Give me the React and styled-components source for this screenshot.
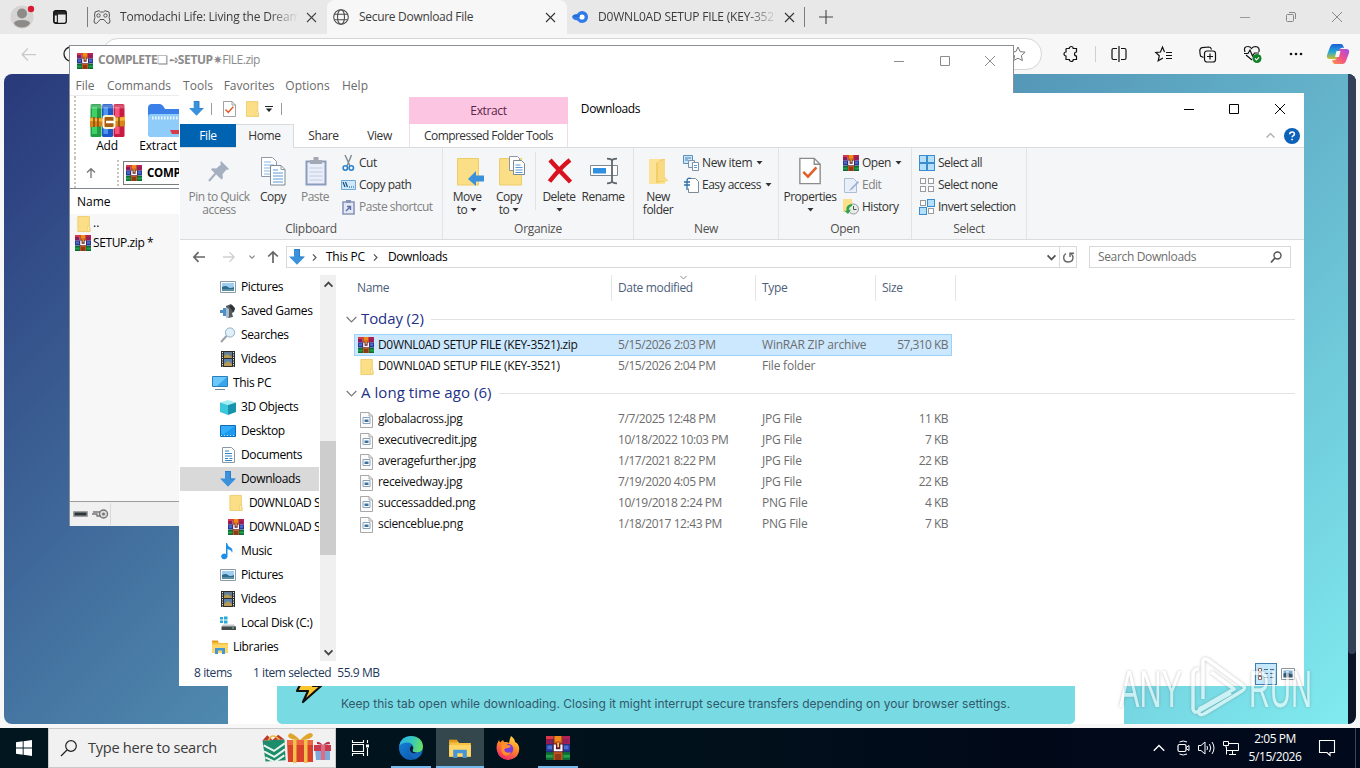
import React from 'react';
import styled, { createGlobalStyle, css } from 'styled-components';

const Global = createGlobalStyle`
  * { box-sizing: border-box; }
  html, body { margin: 0; padding: 0; overflow: hidden; }
  body { font-family: "Open Sans", "Noto Sans", "DejaVu Sans", sans-serif; font-size: 12px; color: #000; }
  svg { display: block; flex: none; overflow: visible; }
`;

/* ---------- icons ---------- */

const Svg = ({ w = 16, h, box, children, ...rest }) => (
  <svg width={w} height={h || w} viewBox={box || `0 0 ${w} ${h || w}`} fill="none" {...rest}>{children}</svg>
);

const Rar = ({ s = 16 }) => (
  <Svg w={s} box="0 0 16 16">
    <path d="M0 1h4.5v4.5H0z" fill="#a8173d" /><path d="M11 0h5v5.5h-5z" fill="#b32054" />
    <path d="M0 0h5v2H0z" fill="#d63a4b" /><path d="M1 2.5h3.5v2.4H1z" fill="#7c1f6c" /><path d="M11.5 2h3.6v2.8h-3.6z" fill="#8f1f5e" />
    <path d="M0 5.5h16v5H0z" fill="#263a9a" /><path d="M1 6.4h3v2.4H1zM12 6.4h3v2.4h-3z" fill="#4a6fd0" />
    <path d="M0 10.7h16V16H0z" fill="#0d6b35" /><path d="M0 12.5h4.5v2H0zM11.5 12.5H16v2h-4.5z" fill="#22a04a" />
    <path d="M5 0h6v16H5z" fill="#c4551c" /><path d="M6 0h4v3.6H6z" fill="#f08a1d" /><path d="M6 12h4v4H6z" fill="#8d3a18" />
    <path d="M4.6 5h7v5.8h-7z" fill="#5c1c35" /><path d="M5.2 5.6h1.4v3.2h3V5.6H11v4.6H5.2z" fill="#fff" /><path d="M7.5 4.5h1.2v3H7.5z" fill="#ffc24c" />
  </Svg>
);

const RarBooks = () => (
  <Svg w={35} h={35}>
    <rect x="0.5" y="1" width="11" height="33" rx="1.5" fill="#1f9e45" /><path d="M2 4h5v27H2z" fill="#3fd166" />
    <rect x="12" y="1" width="11" height="33" rx="1.5" fill="#2057c8" /><path d="M13.500 4h4.500v27h-4.500z" fill="#4a97f2" />
    <rect x="23.500" y="1" width="11" height="33" rx="1.500" fill="#c91b41" /><path d="M25 4h4.500v27H25z" fill="#f4557a" />
    <path d="M0 1.500h35v4H0z" fill="#fff" opacity=".25" />
    <path d="M0 14.500l17 1 18-2v10l-18-.5-17 1z" fill="#d8841c" /><path d="M0 15l17 1 18-2v3.500l-18 1-17-.5z" fill="#f7b63b" />
    <path d="M4 14v10M8 14v10M29 14v10" stroke="#8b4a0c" strokeWidth="1.500" />
    <rect x="13.500" y="13" width="11" height="12" rx="2" fill="#a85c12" stroke="#fff3d0" strokeWidth="2" /><path d="M16 19h9" stroke="#fff" strokeWidth="2.500" />
  </Svg>
);

const BlueFolder = () => (
  <Svg w={20} h={35}>
    <path d="M0 5q0-4 4-4h8q2 0 3.500 2.500L17 6h23v28H4q-4 0-4-4z" fill="#3b7fe8" />
    <path d="M0 14q0-3 3-3h37v23H4q-4 0-4-4z" fill="#90ccfa" /><path d="M4 15h36" stroke="#eaf6ff" strokeWidth="3" strokeDasharray="1.5 1.5" />
    <path d="M22 27h18v4H24z" fill="#d8394b" />
  </Svg>
);

const Folder = ({ w = 14, h = 17 }) => (
  <Svg w={w} h={h} box="0 0 14 17"><path d="M.5 .5h12.200v12l.8.5v3.500H.5z" fill="#fbdf86" stroke="#e9c55e" strokeWidth=".8" /><path d="M11 10.500h2v5.800h-2z" fill="#fff0bb" stroke="#e9c55e" strokeWidth=".6" /></Svg>
);

const Down = ({ w = 16 }) => (
  <Svg w={w} box="0 0 16 16"><path d="M5 0h6v7.500h5L8 15.800 0 7.500h5z" fill="#3a92dc" /><path d="M5.500 .5h5v7.500h4" stroke="#2475c0" strokeWidth=".7" /></Svg>
);

const CheckDoc = ({ w = 13, h = 16 }) => (
  <Svg w={w} h={h} box="0 0 13 16"><path d="M.5 .5h8.500l3.500 3.500v11.500H.5z" fill="#fff" stroke="#8b8b8b" strokeWidth=".8" /><path d="M9 .5V4h3.500" stroke="#8b8b8b" strokeWidth=".8" /><path d="M2.500 8.500l2.800 2.800 5-5.500" stroke="#e0602c" strokeWidth="1.500" /></Svg>
);

const ImgFile = () => (
  <Svg w={13} h={16}><path d="M.5.500h8.500l3.500 3.500v11.500H.5z" fill="#fbfbfb" stroke="#a8a8a8" /><path d="M9 .5V4h3.500" stroke="#a8a8a8" /><path d="M3 5.500h7v6H3z" fill="#fff" stroke="#86a3bd" /><path d="M4.500 7.500h4v2.500h-4z" fill="#3d719e" /></Svg>
);

const Picture = () => (
  <Svg w={16} h={12}><path d="M.5.500h15v11H.5z" fill="#fff" stroke="#8b9aa5" /><path d="M2 2h12v8H2z" fill="#9dcdf0" /><path d="M2 6q4-2 6 0t6 0v4H2z" fill="#2d6b8f" /><path d="M2 8h12v2H2z" fill="#5b8fa5" /></Svg>
);
const Games = () => (
  <Svg><path d="M6 3l5-2 4 4-1 4-2 1 1 4-5 1-2-4z" fill="#555b61" /><path d="M9 3l3-1 3 4-2 3z" fill="#2e3338" /><path d="M3 5h3v2h2v3H6v3H3v-3H0V7h3z" fill="#4e8fc7" /><path d="M6 4l3 2v8l-3 1z" fill="#a9bccc" /></Svg>
);
const Glass = () => (
  <Svg><path d="M6.500 9L1 15" stroke="#9aa1a8" strokeWidth="2" /><circle cx="10" cy="5.500" r="4.600" fill="#dff0fb" stroke="#93aec4" /></Svg>
);
const Film = () => (
  <Svg w={14} h={16}><path d="M0 0h14v16H0z" fill="#2b2b2b" /><path d="M3 1h8v6H3z" fill="#5f7c94" /><path d="M3 8h8v7H3z" fill="#5b85ad" /><path d="M3 5l3-2 5 3v1H3zM3 13l4-3 4 3v2H3z" fill="#b79b52" /><path d="M1.500 1v15M12.500 1v15" stroke="#eee" strokeWidth="1" strokeDasharray="1.200 1.200" /></Svg>
);
const Pc = () => (
  <Svg><path d="M.5 1.500h15v10H.5z" fill="#36a7ec" stroke="#2980b8" /><path d="M1 2h14L5 11H1z" fill="#6cc7fb" /><path d="M3 14.500h10" stroke="#6e8796" /></Svg>
);
const Cube = () => (
  <Svg><path d="M0 3.500L8 1l8 2.500L8 6z" fill="#a6eef4" /><path d="M0 3.500L8 6v10l-8-3z" fill="#3bc7dc" /><path d="M16 3.500L8 6v10l8-3z" fill="#1893ae" /></Svg>
);
const Desk = () => (
  <Svg w={16} h={12}><path d="M.5.500h15v11H.5z" fill="#1b9af0" stroke="#0c6dbb" /><path d="M1 1h14L4 9H1z" fill="#34aefb" /><path d="M1 10.500h14" stroke="#bfe3ff" strokeDasharray="1 2" /></Svg>
);
const Docs = () => (
  <Svg w={13} h={16}><path d="M.5.500h9l3 3v12H.5z" fill="#fff" stroke="#8c98a3" /><path d="M3 4h4M3 6.500h7M3 9h7M3 11.500h3M7.500 11.500h3M3 13.500h7" stroke="#2f86c6" /></Svg>
);
const Music = () => (
  <Svg><path d="M7 0q.5 3 3.500 4.500T12 10q0-3-4.500-4v7a3.200 2.800 0 1 1-1.500-2V0z" fill="#1e90e6" /></Svg>
);
const Disk = () => (
  <Svg w={16} h={14}><path d="M0 1h3v2.500H0zM4 .5h3.500v3H4zM0 4.500h3V7H0zM4 4.500h3.500v3H4z" fill="#25a9d6" /><path d="M3 8.500h11l2 2.500H1.500z" fill="#c4c9cd" /><path d="M1.500 10.500H16V14H1.500z" fill="#44494d" /><path d="M12 12h2" stroke="#5fe07a" /></Svg>
);
const Libs = ({ w = 16, h = 14 }) => (
  <Svg w={w} h={h} box="0 0 16 14"><path d="M0 1.500h6l1.500 1.500H16V13H0z" fill="#f6c243" /><path d="M0 .5h6v2H0z" fill="#e69a1d" /><path d="M0 4.500h16V13H0z" fill="#ffd768" /><path d="M3 14V8h10v6h-3v-3.500H6V14z" fill="#4596d5" /></Svg>
);

const Pin = () => (
  <Svg w={22} h={22}><path d="M13 1l8 8-1.500 1-1-.4-4 4.600.4 4-1.500 1.300L3 9.500l1.300-1.300 4 .4 4.600-4-.6-1.800z" fill="#a4b0bf" /><path d="M7.500 13.500L1 21" stroke="#a4b0bf" strokeWidth="2" /></Svg>
);
const CopyI = () => (
  <Svg w={25} h={29}><g><path d="M.5.500h11l4 4v15H.5z" fill="#fff" stroke="#8d99a6" /><path d="M3 5h7M3 8h10M3 11h8M3 14h8M3 17h8" stroke="#85b7e0" /></g><g transform="translate(9 8)"><path d="M.5.500h10.500l4 4v15.500H.5z" fill="#fff" stroke="#7d8996" /><path d="M11 .5v4h4" stroke="#8d99a6" /><path d="M3 5h5M3 8h10M3 11h10M3 14h10M3 17h10" stroke="#5b9bd5" /></g></Svg>
);
const PasteI = () => (
  <Svg w={22} h={29}><path d="M1.500 4.500h19v23h-19z" fill="#e9eef8" stroke="#8b9cc0" strokeWidth="2" /><path d="M5 3h3.500V0h5v3H17v4H5z" fill="#a3a9b2" /><path d="M4.500 11h13M4.500 15h13M4.500 19h13M4.500 23h13" stroke="#c3cee4" /></Svg>
);
const CutI = () => (
  <Svg w={13} h={17}><path d="M3 0l5 11M9.500 0L5 11" stroke="#7f8993" strokeWidth="1.400" /><circle cx="3.300" cy="13" r="2.200" stroke="#2c82c9" strokeWidth="1.600" /><circle cx="9.300" cy="13" r="2.200" stroke="#2c82c9" strokeWidth="1.600" /></Svg>
);
const PathI = () => (
  <Svg w={15} h={10}><path d="M.5.500h14v9H.5z" fill="#cfe8fb" stroke="#6ba8d6" /><path d="M2 2l2 5M4.500 2l2 5M8 7h1M10 7h1M12 7h1" stroke="#14507e" strokeWidth="1.200" /></Svg>
);
const ShortI = () => (
  <Svg w={13} h={15}><path d="M1 2h11v12H1z" fill="#e3e8f5" stroke="#8b95b8" strokeWidth="1.600" /><path d="M4 0h5v3H4z" fill="#8b95b8" /><path d="M4 11l4-4M5 6.500h3.500V10" stroke="#5c6ea5" strokeWidth="1.400" /></Svg>
);
const MoveI = () => (
  <Svg w={27} h={29}><path d="M.5 1.500h21V28H.5z" fill="#fbdf86" stroke="#eccb6d" /><path d="M27 18.500h-8v-4.500L11 22l8 7v-4.500h8z" fill="#3a92dc" /></Svg>
);
const CopyToI = () => (
  <Svg w={26} h={30}><path d="M.5 2.500h22V29H.5z" fill="#fbdf86" stroke="#eccb6d" /><path d="M10.500.500h8l2 2v12h-10z" fill="#fff" stroke="#8d99a6" /><path d="M14.500 4.500h8l3 3v11h-11z" fill="#fff" stroke="#7d8996" /><path d="M16.500 9h5M16.500 11.500h7M16.500 14h7M16.500 16.500h7" stroke="#5b9bd5" /></Svg>
);
const DelI = () => (
  <Svg w={26} h={26}><path d="M3 2Q10 10 23.500 24M23 2Q14 9 2.500 23.500" stroke="#d9121f" strokeWidth="4.400" /></Svg>
);
const RenI = () => (
  <Svg w={28} h={26}><path d="M.5 7.500h27v10H.5z" fill="#fff" stroke="#7d8790" /><path d="M3 10h13v5.500H3z" fill="#2f8fe0" /><path d="M17 .7q5 0 5 2.500v19.600q0 2.500-5 2.500M27 .7q-5 0-5 2.500v19.600q0 2.500 5 2.500" stroke="#5f666d" strokeWidth="1.800" /></Svg>
);
const NewFI = () => (
  <Svg w={19} h={25}><path d="M0 0h16v25H0z" fill="#fbe297" /><path d="M7 4l6-4h3v18l3 4-12 2z" fill="#f3cd66" /><path d="M9 3l7-2v18l3 3H9z" fill="#f8da83" /></Svg>
);
const NewItemI = () => (
  <Svg w={16}><path d="M.5.500h9v8h-9z" fill="#cbe6fa" stroke="#5f91b8" /><path d="M2 3h6M2 5h3" stroke="#3f82b4" /><path d="M5.500 5.500h6v7h-6z" fill="#eef4fa" stroke="#7d92a5" /><path d="M9.500 7.500h6v8h-6z" fill="#fff" stroke="#7d92a5" /><path d="M11 10.500h3M11 12.500h3" stroke="#5b9bd5" /></Svg>
);
const EasyI = () => (
  <Svg w={15} h={16}><path d="M4.500 1.500h7l3 3v11h-10v-4" fill="#fff" stroke="#7f8b96" /><path d="M7 1.500q-4-1.500-4 3V13M0 5h6M0 8h6" stroke="#2f6fa8" strokeWidth="1.300" /></Svg>
);
const EditI = () => (
  <Svg w={15} h={16}><path d="M.5 1.500h9l3 3v11H.5z" fill="#e8eff9" stroke="#aebdd3" /><path d="M14 4L7 11l-2 3 3-1.500 7-7z" fill="#9db4d6" /></Svg>
);
const HistI = () => (
  <Svg w={16}><path d="M0 0h9l1 13H0z" fill="#fbe08c" /><circle cx="10.500" cy="10" r="5" fill="#e7ece9" stroke="#8d979c" /><path d="M10.500 7v3.500h3" stroke="#555" /><path d="M9 5Q2 6 3.500 12l-2.500-.5L5 15l3-4.500-2 .5Q5.500 8 9 7z" fill="#2fa54a" /></Svg>
);
const SelI = ({ kind }) => {
  const on = kind === 'all' ? [1, 1, 1, 1] : kind === 'inv' ? [0, 1, 1, 0] : [0, 0, 0, 0];
  return (
    <Svg w={16}>
      {on.map((o, i) => {
        const x = (i % 2) * 8, y = (i > 1 ? 1 : 0) * 8;
        return o
          ? <rect key={i} x={x + .5} y={y + .5} width="7" height="7" fill="#b5e0fc" stroke="#3c8dd0" />
          : <rect key={i} x={x + 1.500} y={y + 1.500} width="5" height="5" fill="#fff" stroke="#9a9a9a" />;
      })}
    </Svg>
  );
};

const Min = ({ c = '#000' }) => <Svg w={10} h={10}><path d="M0 5.500h10" stroke={c} /></Svg>;
const Max = ({ c = '#000' }) => <Svg w={10} h={10}><path d="M.5.500h9v9h-9z" stroke={c} /></Svg>;
const Restore = ({ c }) => <Svg w={10} h={10}><rect x=".5" y="2.500" width="7" height="7" rx="1" stroke={c} /><path d="M3 .5h5q1.500 0 1.500 1.500v5" stroke={c} /></Svg>;
const Cross = ({ c = '#000', s = 10, sw = 1 }) => <Svg w={s} box="0 0 10 10"><path d="M0 0l10 10M10 0L0 10" stroke={c} strokeWidth={sw} /></Svg>;
const Chev = ({ d = 'down', c = '#555', s = 8, sw = 1.400 }) => {
  const r = { down: 0, left: 90, up: 180, right: 270 }[d];
  return <Svg w={s} box="0 0 8 8"><path d="M.5 2.200L4 5.700l3.500-3.500" stroke={c} strokeWidth={sw} transform={`rotate(${r} 4 4)`} /></Svg>;
};
const Arrow = ({ d = 'left', c = '#666', s = 12, sw = 1.700 }) => (
  <Svg w={s} box="0 0 12 12"><path d="M12 6H1M5.500 1.200L.9 6l4.600 4.800" stroke={c} strokeWidth={sw} transform={`rotate(${{ left: 0, up: 90, right: 180 }[d]} 6 6)`} /></Svg>
);
const Caret = () => <Svg w={7} h={4}><path d="M.5 0h6L3.500 3.500z" fill="#333" /></Svg>;

/* ---------- shared pieces ---------- */

const Row = styled.div`
  display: flex;
  align-items: center;
`;
const Slot = styled.div`
  flex: none;
  display: flex;
  align-items: center;
  justify-content: center;
  width: ${(p) => p.$w}px;
  margin-left: ${(p) => p.$ml || 0}px;
`;
const Label = styled.span`
  flex: none;
  white-space: pre;
  ${(p) => p.$ls !== undefined && css`letter-spacing: ${p.$ls}px;`}
  margin-left: ${(p) => p.$ml || 0}px;
  margin-bottom: 2px;
  color: ${(p) => p.$c || 'inherit'};
  font-weight: ${(p) => p.$b ? 700 : 400};
`;
const Rule = styled.div`
  flex: none;
  width: 1px;
  height: ${(p) => p.$h}px;
  margin-left: ${(p) => p.$ml || 0}px;
  background: ${(p) => p.$c || '#b5b5b5'};
`;
const Spacer = styled.div`flex: 1;`;

/* ---------- desktop & browser ---------- */

const Screen = styled.div`
  position: relative;
  width: 1360px;
  height: 768px;
  overflow: hidden;
  display: flex;
  flex-direction: column;
  background: #f7f7f7;
`;
const TabStrip = styled(Row)`
  height: 34px;
  background: #e8e8e8;
  font-size: 12px;
  color: #3c3c3c;
`;
const Avatar = styled.div`
  flex: none;
  margin-left: 10px;
  width: 24px;
  height: 24px;
`;
const Tab = styled(Row)`
  flex: none;
  height: 34px;
  width: ${(p) => p.$w}px;
  padding-left: ${(p) => p.$pl}px;
  border-radius: 8px 8px 0 0;
  background: ${(p) => p.$on ? '#f7f7f7' : 'transparent'};
`;
const TabText = styled.span`
  flex: none;
  width: ${(p) => p.$w}px;
  margin-left: 10px;
  margin-bottom: 1px;
  white-space: nowrap;
  overflow: hidden;
  letter-spacing: ${(p) => p.$ls || 0}px;
  ${(p) => p.$fade && css`mask-image: linear-gradient(90deg, #000 84%, transparent 101%);`}
`;
const Toolbar = styled(Row)`height: 40px;`;
const UrlBar = styled(Row)`
  flex: none;
  width: 940px;
  height: 32px;
  padding-right: 15px;
  justify-content: flex-end;
  border: 1px solid #d6d6d6;
  border-radius: 16px;
  background: #fff;
`;
const Viewport = styled.div`
  display: flex;
  justify-content: space-between;
  height: 650px;
  margin: 0 4px;
  border-radius: 8px;
  overflow: hidden;
  background: linear-gradient(135deg, #29397b 0%, #5699b9 52%, #80ebf0 100%);
`;
const Card = styled.div`
  width: 896px;
  margin: 60px 0 0 224px;
  background: #fff;
  display: flex;
  flex-direction: column;
  justify-content: flex-end;
  padding: 0 49px;
`;
const Notice = styled(Row)`
  height: 90px;
  padding: 41px 0 0 18px;
  align-items: flex-start;
  border-radius: 0 0 5px 5px;
  background: #78dbe3;
  color: #33576b;
  font-family: Inter, "Open Sans", sans-serif;
  font-size: 12px;
`;
const NoticeText = styled.div`
  margin: 21px 0 0 19px;
  line-height: 16px;
  white-space: nowrap;
  letter-spacing: ${(p) => p.$ls}px;
`;
const PageScroll = styled.div`
  width: 8px;
  background: #0c1326;
  &::before {
    content: '';
    display: block;
    height: 580px;
    background: #334058;
    border-radius: 0 0 4px 4px;
  }
`;

const Browser = () => (
  <>
    <TabStrip>
      <Avatar>
        <Svg w={24}><circle cx="12" cy="12" r="11.500" fill="#d6d4d2" /><circle cx="12" cy="8.500" r="5" fill="#8d8b89" /><path d="M4 18.500q0-3.500 8-3.500t8 3.500q-2.500 4-8 4t-8-4z" fill="#8d8b89" /><circle cx="21" cy="4" r="3.200" fill="#d91b34" /></Svg>
      </Avatar>
      <Slot $w={14} $ml={19}><Svg w={14}><rect x=".7" y=".7" width="12.600" height="12.600" rx="2" stroke="#111" strokeWidth="1.300" /><path d="M1 1h12v3.500H5V13H1z" fill="#111" opacity=".9" /><path d="M1.800 5.500h2V12h-2z" fill="#e8e8e8" /></Svg></Slot>
      <Rule $h={20} $ml={20} $c="#7d7d7d" />
      <Tab $w={239} $pl={6}>
        <Svg w={16} h={14}><path d="M4 1q1-1 2.500 1h3q1.500-2 2.500-1l3 1 .5 4q-1 1 0 3t0 4q-2 1.500-4-1.500L10 9.500H6L4.500 11.500q-2 3-4 1.500-1-2 0-4t0-3L1 2z" stroke="#555" /><circle cx="4.500" cy="5.500" r="1.700" stroke="#555" /><circle cx="11.500" cy="5.500" r="1.700" stroke="#555" /></Svg>
        <TabText $w={177} $fade $ls={-0.2}>Tomodachi Life: Living the Dream</TabText>
        <Slot $w={9} $ml={10}><Cross c="#444" s={9} sw={1.200} /></Slot>
      </Tab>
      <Tab $w={240} $pl={6} $on>
        <Svg w={16}><g stroke="#4c4c4c" strokeWidth="1.100"><circle cx="8" cy="8" r="7.300" /><ellipse cx="8" cy="8" rx="3.500" ry="7.300" /><path d="M1.500 5.300h13M1.500 10.700h13" /></g></Svg>
        <TabText $w={176} $ls={-0.3}>Secure Download File</TabText>
        <Slot $w={9} $ml={11}><Cross c="#333" s={9} sw={1.200} /></Slot>
      </Tab>
      <Tab $w={237} $pl={5}>
        <Svg w={16} h={12}><path d="M0 6q1-3 5-3Q7 0 10.500 0 16 1 16 6t-5.500 6Q7 12 5.500 9.500 1 9 0 6z" fill="#2f7be8" /><circle cx="10" cy="6" r="2.600" fill="#fff" /><path d="M1 5h7" stroke="#1b5fc4" /></Svg>
        <TabText $w={178} $fade $ls={-0.2}>D0WNL0AD SETUP FILE (KEY-3521)</TabText>
        <Slot $w={9} $ml={9}><Cross c="#333" s={9} sw={1.200} /></Slot>
      </Tab>
      <Rule $h={20} $c="#7d7d7d" />
      <Slot $w={14} $ml={14}><Svg w={14}><path d="M7 0v14M0 7h14" stroke="#444" strokeWidth="1.100" /></Svg></Slot>
      <Spacer />
      <Slot $w={46}><Min c="#999" /></Slot>
      <Slot $w={46}><Restore c="#888" /></Slot>
      <Slot $w={46}><Cross c="#888" /></Slot>
    </TabStrip>
    <Toolbar>
      <Slot $w={16} $ml={20}><Arrow c="#c9c9c9" s={15} sw={1} /></Slot>
      <Slot $w={16} $ml={27}><Svg w={16}><circle cx="8" cy="8" r="7" stroke="#222" strokeWidth="1.300" /></Svg></Slot>
      <Slot $w={940} $ml={23}><UrlBar><Svg w={16}><path d="M8 1l2.100 4.600 5 .6-3.700 3.400 1 5L8 12.200 3.600 14.600l1-5L.9 6.200l5-.6z" stroke="#777" /></Svg></UrlBar></Slot>
      <Slot $w={18} $ml={20}><Svg w={16}><path d="M4 2.500h2.200a2 2 0 0 1 4 0h3.300V6a2 2 0 1 0 0 4v3.500h-3.200a2 2 0 0 1-4 0H3V10a2 2 0 1 1 0-4V3.500q0-1 1-1z" stroke="#111" strokeWidth="1.200" /></Svg></Slot>
      <Rule $h={16} $ml={15} $c="#cfcfcf" />
      <Slot $w={16} $ml={15}><Svg w={16}><path d="M6 2.500H2.500q-1.500 0-1.500 1.500v8q0 1.500 1.500 1.500H6M10 2.500h3.500q1.500 0 1.500 1.500v8q0 1.500-1.500 1.500H10M8 0v16" stroke="#111" strokeWidth="1.200" /></Svg></Slot>
      <Slot $w={18} $ml={28}><Svg w={18} h={16}><path d="M9.500 6L7.500 1 5.500 6 .8 6.500l3.500 3.300L3.200 14.800 8 12M11 6.500h6M11 9.500h6M11 12.500h6" stroke="#111" strokeWidth="1.200" /></Svg></Slot>
      <Slot $w={17} $ml={26}><Svg w={17} h={17}><path d="M4.500 11.500L1.500 10Q.5 5 1 3.500 1.500 2 3 1.700L10 1q1.800 0 2.500 2.500" stroke="#111" strokeWidth="1.200" /><rect x="5.500" y="5" width="11" height="11" rx="2.500" stroke="#111" strokeWidth="1.200" /><path d="M11 7.500v6M8 10.500h6" stroke="#111" strokeWidth="1.200" /></Svg></Slot>
      <Slot $w={19} $ml={27}><Svg w={19} h={18}><path d="M2 7Q0 1.500 5 1.500q2 0 3.500 2 1.500-2 4-2Q17 2 16 7M3 10l6 5M1 8.500h4l2-3.500 2.500 6 2-3H16" stroke="#111" strokeWidth="1.200" /><circle cx="14" cy="13.500" r="4.500" fill="#12802a" /><path d="M12 13.500l1.500 1.500 2.500-2.700" stroke="#fff" strokeWidth="1.100" /></Svg></Slot>
      <Slot $w={16} $ml={26}><Svg w={14} h={4}><g fill="#111"><circle cx="2" cy="2" r="1.300" /><circle cx="7" cy="2" r="1.300" /><circle cx="12" cy="2" r="1.300" /></g></Svg></Slot>
      <Slot $w={22} $ml={23}>
        <Svg w={22} h={20}>
          <defs><linearGradient id="cpA" x1="0" y1="0" x2="0" y2="1"><stop offset="0" stopColor="#1d5fd6" /><stop offset=".5" stopColor="#22a6d8" /><stop offset="1" stopColor="#d4c51e" /></linearGradient><linearGradient id="cpB" x1="1" y1="0" x2="0" y2="1"><stop offset="0" stopColor="#9a4df0" /><stop offset=".5" stopColor="#f0508c" /><stop offset="1" stopColor="#ff9440" /></linearGradient></defs>
          <path d="M6 0h8q2 0 3 4-4-1-5 3l-2 7q-1 2-3 1H3Q-1 15 0 11L3 3q1-3 3-3z" fill="url(#cpA)" /><path d="M16 20H8q-2 0-3-4 4 1 5-3l2-7q1-2 3-1h4q4 0 3 4l-3 8q-1 3-3 3z" fill="url(#cpB)" /><path d="M9.500 7h4l-1.500 6h-4z" fill="#f7f7f7" />
        </Svg>
      </Slot>
    </Toolbar>
    <Viewport>
      <Card>
        <Notice>
          <Svg w={27} h={30}><path d="M9 2h14l-5 9h8L8 27l5-11H2z" fill="#fbc52d" stroke="#111" strokeWidth="2.200" strokeLinejoin="round" /></Svg>
          <NoticeText $ls={0}>Keep this tab open while downloading. Closing it might interrupt secure transfers depending on your browser settings.</NoticeText>
        </Notice>
      </Card>
      <PageScroll />
    </Viewport>
    <Spacer />
  </>
);

/* ---------- archive window ---------- */

const RarWin = styled.div`
  position: absolute;
  left: 69px;
  top: 45px;
  width: 945px;
  height: 481px;
  display: flex;
  flex-direction: column;
  background: #fff;
  border: 1px solid #8a8f96;
  border-bottom: 0;
`;
const RarTitle = styled(Row)`
  height: 29px;
  padding-left: 7px;
  color: #8b8b8b;
  font-size: 12px;
`;
const RarMenu = styled(Row)`
  height: 21px;
  padding-left: 5px;
  font-size: 12px;
  color: #6a6a6a;
  border-bottom: 1px solid #ececec;
`;
const RarTools = styled.div`
  height: 62px;
  margin-left: 4px;
  padding-left: 13px;
  display: flex;
  border-left: 2px dotted #c9c4bb;
`;
const RarTool = styled.div`
  width: ${(p) => p.$w}px;
  display: flex;
  flex: none;
  flex-direction: column;
  align-items: center;
  padding-top: 7px;
  font-size: 12px;
  line-height: 15px;
  letter-spacing: -0.2px;
`;
const RarPathRow = styled(Row)`
  height: 30px;
  margin-left: 4px;
  border-left: 2px dotted #c9c4bb;
`;
const RarPath = styled(Row)`
  width: 700px;
  height: 24px;
  margin-left: 4px;
  padding-left: 2px;
  border: 1px solid #7a7a7a;
  font-size: 11.500px;
`;
const DotSep = styled.div`
  height: 26px;
  margin-left: 20px;
  border-left: 2px dotted #c9c4bb;
`;
const RarList = styled.div`
  flex: 1;
  border-top: 1px solid #82878f;
  border-bottom: 1px solid #9b9b9b;
  background: #f7f7f7;
  font-size: 12px;
`;
const RarHead = styled.div`
  height: 25px;
  padding-left: 7px;
  line-height: 25px;
  background: #fff;
`;
const RarItem = styled(Row)`
  height: ${(p) => p.$h}px;
  padding-left: ${(p) => p.$pl}px;
`;
const RarStatus = styled(Row)`
  height: 24px;
  padding-left: 3px;
  background: #f0f0f0;
`;

const Archive = () => (
  <RarWin>
    <RarTitle>
      <Rar />
      <Label $ml={5} $b $ls={-0.5}>COMPLETE</Label><Label $ls={-1.1}>❏ ➺</Label><Label $b $ls={-0.4}>SETUP</Label><Label $ls={-0.5}>✷FILE.zip</Label>
      <Spacer />
      <Slot $w={46}><Min c="#8c8c8c" /></Slot>
      <Slot $w={45}><Max c="#8c8c8c" /></Slot>
      <Slot $w={46}><Cross c="#8c8c8c" /></Slot>
    </RarTitle>
    <RarMenu>
      <Slot as="span" $w={20}>File</Slot>
      <Slot as="span" $w={64} $ml={12}>Commands</Slot>
      <Slot as="span" $w={28} $ml={13}>Tools</Slot>
      <Slot as="span" $w={48} $ml={13}>Favorites</Slot>
      <Slot as="span" $w={43} $ml={13}>Options</Slot>
      <Slot as="span" $w={26} $ml={13}>Help</Slot>
    </RarMenu>
    <RarTools>
      <RarTool $w={36}><RarBooks />Add</RarTool>
      <RarTool $w={66}><BlueFolder />Extract</RarTool>
    </RarTools>
    <RarPathRow>
      <Slot $w={12} $ml={9}><Arrow d="up" c="#777" s={10} sw={1.600} /></Slot>
      <DotSep />
      <RarPath><Rar /><Label $ml={5} $b $ls={-0.3}>COMPLETE</Label></RarPath>
    </RarPathRow>
    <RarList>
      <RarHead>Name</RarHead>
      <RarItem $h={19} $pl={7}><Folder w={14} h={16} /><Label $ml={2}>..</Label></RarItem>
      <RarItem $h={20} $pl={5}><Rar /><Label $ml={2} $ls={-0.4}>SETUP.zip *</Label></RarItem>
    </RarList>
    <RarStatus>
      <Svg w={15} h={6}><rect width="15" height="6" rx="1" fill="#9b9f9f" /><path d="M1.500 1.500h12v3h-12z" fill="#2c3436" /></Svg>
      <Slot $w={16} $ml={4}><Svg w={16} h={10}><circle cx="11.500" cy="5" r="4" fill="#ddd" stroke="#777" strokeWidth="1.400" /><circle cx="11.500" cy="5" r="1.500" fill="#777" /><path d="M1 3h7M0 5h5v2h4" stroke="#777" strokeWidth="1.300" /></Svg></Slot>
      <Rule $h={22} $ml={2} $c="#d9d9d9" />
    </RarStatus>
  </RarWin>
);

/* ---------- file explorer ---------- */

const Explorer = styled.div`
  position: absolute;
  left: 180px;
  top: 93px;
  width: 1124px;
  height: 593px;
  display: flex;
  flex-direction: column;
  background: #fff;
  box-shadow: -1px 0 0 #fff;
  letter-spacing: -0.35px;
`;
const TitleBar = styled(Row)`
  height: 31px;
  padding-left: 8px;
  align-items: flex-start;
  & > div { height: 31px; }
`;
const ContextTag = styled.div`
  flex: none;
  align-self: flex-end;
  margin-left: 127px;
  width: 159px;
  && { height: 27px; }
  line-height: 28px;
  text-align: center;
  background: #fcc5e2;
  color: #5b2446;
`;
const RibbonTabs = styled(Row)`
  height: 24px;
  border-bottom: 1px solid #dadbdc;
  color: #333;
  letter-spacing: -0.4px;
`;
const RTab = styled.div`
  flex: none;
  align-self: stretch;
  width: ${(p) => p.$w}px;
  margin-left: ${(p) => p.$ml || 0}px;
  line-height: 23px;
  text-align: center;
  ${(p) => p.$kind === 'file' && css`background: #0063b1; color: #fff;`}
  ${(p) => p.$kind === 'on' && css`height: 24px; background: #f5f6f7; border: 1px solid #dadbdc; border-width: 1px 1px 0 0; line-height: 21px;`}
  ${(p) => p.$kind === 'ctx' && css`border: 1px solid #eedce6; border-width: 0 1px; letter-spacing: -0.56px;`}
`;
const Ribbon = styled.div`
  height: 92px;
  display: flex;
  background: #f5f6f7;
  border-bottom: 1px solid #dadbdc;
  color: #333;
  letter-spacing: -0.5px;
`;
const Group = styled.div`
  flex: none;
  width: ${(p) => p.$w}px;
  display: flex;
  flex-direction: column;
  position: relative;
  border-right: 1px solid #e2e3e4;
`;
const Buttons = styled.div`
  display: flex;
  height: 72px;
  padding: 4px 0 0 ${(p) => p.$pl || 4}px;
`;
const Caption = styled.div`
  text-align: center;
  line-height: 20px;
  color: #505050;
  letter-spacing: -0.3px;
`;
const Big = styled.div`
  flex: none;
  width: ${(p) => p.$w}px;
  margin-left: ${(p) => p.$ml || 0}px;
  display: flex;
  flex-direction: column;
  align-items: center;
  line-height: 13px;
  text-align: center;
  white-space: nowrap;
  color: ${(p) => p.$dim ? '#808080' : '#333'};
`;
const BigIcon = styled.div`
  height: 38px;
  padding-left: ${(p) => p.$shift || 0}px;
  display: flex;
  align-items: center;
  justify-content: center;
`;
const Line = styled.div`
  height: 13px;
  display: flex;
  align-items: center;
  gap: 3px;
`;
const SmallCol = styled.div`
  margin-left: ${(p) => p.$ml || 0}px;
  display: flex;
  flex-direction: column;
`;
const Small = styled(Row)`
  height: 22px;
  white-space: nowrap;
  color: ${(p) => p.$dim ? '#808080' : '#333'};
`;
const SmallIcon = styled.div`
  width: 16px;
  margin-right: 3px;
  display: flex;
  justify-content: center;
`;
const BigBtn = ({ icon, lines, drop, shift, ...rest }) => (
  <Big {...rest}>
    <BigIcon $shift={shift}>{icon}</BigIcon>
    {lines.map((l, i) => <Line key={i}>{l}{drop && i === lines.length - 1 && <Caret />}</Line>)}
  </Big>
);
const SmallBtn = ({ icon, text, drop, dim, ls }) => (
  <Small $dim={dim}><SmallIcon>{icon}</SmallIcon><Label $ls={ls}>{text}</Label>{drop && <Slot $w={7} $ml={4}><Caret /></Slot>}</Small>
);

const AddressRow = styled(Row)`
  height: 34px;
  margin-bottom: 1px;
`;
const PathBox = styled(Row)`
  flex: none;
  width: 791px;
  height: 22px;
  margin-left: 6px;
  padding-left: 2px;
  border: 1px solid #d9d9d9;
`;
const SearchBox = styled(Row)`
  flex: none;
  width: 202px;
  height: 22px;
  margin-left: 12px;
  padding: 0 8px 0 8px;
  justify-content: space-between;
  border: 1px solid #d9d9d9;
  color: #6d6d6d;
`;
const Main = styled.div`
  display: flex;
  height: 386px;
`;
const Nav = styled.div`
  width: 139px;
  overflow: hidden;
`;
const NavItem = styled(Row)`
  height: 24px;
  padding-left: ${(p) => p.$pl}px;
  background: ${(p) => p.$on ? '#d9d9d9' : 'transparent'};
`;
const NavScroll = styled.div`
  width: 16px;
  margin-left: 1px;
  padding: 5px 0 4px;
  display: flex;
  flex-direction: column;
  align-items: center;
  background: #f0f0f0;
`;
const Thumb = styled.div`
  width: 16px;
  height: 114px;
  margin: 152px 0 auto;
  background: #cdcdcd;
`;
const Pane = styled.div`
  flex: 1;
  color: #6d6d6d;
`;
const HeadRow = styled.div`
  display: flex;
  height: 29px;
  padding-left: 15px;
  color: #4c607a;
`;
const HeadCell = styled.div`
  position: relative;
  width: ${(p) => p.$w}px;
  height: 26px;
  line-height: 25px;
  padding-left: 6px;
  border-right: 1px solid #e5e5e5;
`;
const SortMark = styled.div`
  position: absolute;
  top: -1px;
  left: 68px;
  line-height: 1;
`;
const GroupHead = styled(Row)`
  height: ${(p) => p.$h}px;
  padding: 0 9px 0 10px;
  font-size: 15px;
  color: #1e3287;
`;
const GroupLine = styled.div`
  flex: 1;
  height: 1px;
  margin-left: 7px;
  background: #e2e2e2;
`;
const FileRow = styled(Row)`
  height: ${(p) => p.$on ? 22 : 21}px;
  width: 598px;
  margin-left: 18px;
  padding-left: ${(p) => p.$on ? 3 : 5}px;
  border: 1px solid ${(p) => p.$on ? '#99d1ff' : 'transparent'};
  background: ${(p) => p.$on ? '#cce8ff' : 'transparent'};
`;
const FileIcon = styled.div`width: ${(p) => p.$w}px; display: flex; flex: none;`;
const FileCell = styled.div`
  flex: none;
  width: ${(p) => p.$w}px;
  margin-bottom: 2px;
  white-space: nowrap;
  letter-spacing: ${(p) => p.$ls || 0}px;
  text-align: ${(p) => p.$right ? 'right' : 'left'};
  color: ${(p) => p.$c || 'inherit'};
`;
const StatusBar = styled(Row)`
  flex: 1;
  color: #1e395b;
  letter-spacing: -0.42px;
`;
const ViewOn = styled.div`
  width: 22px;
  height: 22px;
  border: 1px solid #3c7fb1;
  background: #c5e8fb;
  display: flex;
  align-items: center;
  justify-content: center;
`;

const NAV = [
  [<Picture />, 'Pictures', 1], [<Games />, 'Saved Games', 1], [<Glass />, 'Searches', 1], [<Film />, 'Videos', 1],
  [<Pc />, 'This PC', 0], [<Cube />, '3D Objects', 1], [<Desk />, 'Desktop', 1], [<Docs />, 'Documents', 1],
  [<Down />, 'Downloads', 1, true], [<Folder w={14} h={16} />, 'D0WNL0AD S', 2], [<Rar />, 'D0WNL0AD S', 2],
  [<Music />, 'Music', 1], [<Picture />, 'Pictures', 1], [<Film />, 'Videos', 1], [<Disk />, 'Local Disk (C:)', 1], [<Libs />, 'Libraries', 0],
];
const FILES = [
  ['globalacross.jpg', '7/7/2025 12:48 PM', 'JPG File', '11 KB'],
  ['executivecredit.jpg', '10/18/2022 10:03 PM', 'JPG File', '7 KB'],
  ['averagefurther.jpg', '1/17/2021 8:22 PM', 'JPG File', '22 KB'],
  ['receivedway.jpg', '7/19/2020 4:05 PM', 'JPG File', '22 KB'],
  ['successadded.png', '10/19/2018 2:24 PM', 'PNG File', '4 KB'],
  ['scienceblue.png', '1/18/2017 12:43 PM', 'PNG File', '7 KB'],
];
const Entry = ({ icon, iw = 18, name, date, type, size, on }) => (
  <FileRow $on={on}>
    <FileIcon $w={iw}>{icon}</FileIcon>
    <FileCell $w={240} $c="#111" $ls={-0.34}>{name}</FileCell>
    <FileCell $w={144} $ls={-0.43}>{date}</FileCell>
    <FileCell $w={114} $ls={-0.2}>{type}</FileCell>
    <FileCell $w={72} $right $ls={-0.55}>{size}</FileCell>
  </FileRow>
);

const Files = () => (
  <Explorer>
    <TitleBar>
      <Slot $w={16}><Down w={15} /></Slot>
      <Slot $w={1} $ml={7}><Rule $h={12} $c="#9a9a9a" /></Slot>
      <Slot $w={13} $ml={11}><CheckDoc /></Slot>
      <Slot $w={14} $ml={9}><Folder w={13} h={16} /></Slot>
      <Slot $w={8} $ml={6}><Svg w={8} h={6}><path d="M0 .5h8" stroke="#222" /><path d="M.8 2.500h6.400L4 6z" fill="#222" /></Svg></Slot>
      <Slot $w={1} $ml={8}><Rule $h={12} $c="#9a9a9a" /></Slot>
      <ContextTag>Extract</ContextTag>
      <Slot $w={59} $ml={13}>Downloads</Slot>
      <Spacer />
      <Slot $w={46}><Min /></Slot>
      <Slot $w={44}><Max /></Slot>
      <Slot $w={48}><Cross /></Slot>
    </TitleBar>
    <RibbonTabs>
      <RTab $w={56} $kind="file">File</RTab>
      <RTab $w={58} $kind="on">Home</RTab>
      <RTab $w={59}>Share</RTab>
      <RTab $w={53}>View</RTab>
      <RTab $w={159} $ml={3} $kind="ctx">Compressed Folder Tools</RTab>
      <Spacer />
      <Chev d="up" c="#aaa" s={9} sw={1.200} />
      <Slot $w={16} $ml={9}><Svg w={16}><circle cx="8" cy="8" r="8" fill="#0b62b8" /><path d="M5.700 6.300q0-2.300 2.400-2.300t2.300 2q0 1.200-1.300 1.900-1 .6-1 1.400M8.100 10.700v1.600" stroke="#fff" strokeWidth="1.600" /></Svg></Slot>
      <Slot $w={4} />
    </RibbonTabs>
    <Ribbon>
      <Group $w={263}>
        <Buttons>
          <BigBtn $w={70} $dim icon={<Pin />} lines={['Pin to Quick', 'access']} />
          <BigBtn $w={38} shift={1} icon={<CopyI />} lines={['Copy']} />
          <BigBtn $w={38} $ml={4} shift={2} $dim icon={<PasteI />} lines={['Paste']} />
          <SmallCol $ml={6}>
            <SmallBtn icon={<CutI />} text="Cut" />
            <SmallBtn icon={<PathI />} text="Copy path" />
            <SmallBtn icon={<ShortI />} text="Paste shortcut" dim />
          </SmallCol>
        </Buttons>
        <Caption>Clipboard</Caption>
      </Group>
      <Group $w={191}>
        <Buttons>
          <BigBtn $w={40} shift={6} icon={<MoveI />} lines={['Move', 'to']} drop />
          <BigBtn $w={44} shift={5} icon={<CopyToI />} lines={['Copy', 'to']} drop />
          <Rule $h={58} $ml={4} $c="#e2e3e4" />
          <BigBtn $w={40} $ml={3} shift={2} icon={<DelI />} lines={['Delete', '']} drop />
          <BigBtn $w={48} shift={2} icon={<RenI />} lines={['Rename']} />
        </Buttons>
        <Caption>Organize</Caption>
      </Group>
      <Group $w={145}>
        <Buttons>
          <BigBtn $w={40} icon={<NewFI />} lines={['New', 'folder']} />
          <SmallCol $ml={5}>
            <SmallBtn icon={<NewItemI />} text="New item" ls={-0.4} drop />
            <SmallBtn icon={<EasyI />} text="Easy access" drop />
          </SmallCol>
        </Buttons>
        <Caption>New</Caption>
      </Group>
      <Group $w={133}>
        <Buttons>
          <BigBtn $w={54} icon={<CheckDoc w={22} h={28} />} lines={['Properties', '']} drop />
          <SmallCol $ml={6}>
            <SmallBtn icon={<Rar />} text="Open" drop />
            <SmallBtn icon={<EditI />} text="Edit" dim />
            <SmallBtn icon={<HistI />} text="History" />
          </SmallCol>
        </Buttons>
        <Caption>Open</Caption>
      </Group>
      <Group $w={115}>
        <Buttons $pl={7}>
          <SmallCol>
            <SmallBtn icon={<SelI kind="all" />} text="Select all" />
            <SmallBtn icon={<SelI kind="none" />} text="Select none" />
            <SmallBtn icon={<SelI kind="inv" />} text="Invert selection" />
          </SmallCol>
        </Buttons>
        <Caption>Select</Caption>
      </Group>
    </Ribbon>
    <AddressRow>
      <Slot $w={14} $ml={12}><Arrow /></Slot>
      <Slot $w={14} $ml={16}><Arrow d="right" c="#d0d0d0" sw={1.300} /></Slot>
      <Slot $w={8} $ml={12}><Chev c="#888" s={6} sw={1.600} /></Slot>
      <Slot $w={14} $ml={10}><Arrow d="up" /></Slot>
      <PathBox>
        <Down w={16} />
        <Slot $w={8} $ml={5}><Chev d="right" s={7} /></Slot>
        <Label $ml={8} $ls={-0.25}>This PC</Label>
        <Slot $w={8} $ml={7}><Chev d="right" s={7} /></Slot>
        <Label $ml={8}>Downloads</Label>
        <Spacer />
        <Chev s={9} sw={1.600} />
        <Rule $h={20} $ml={3} $c="#d9d9d9" />
        <Slot $w={16}><Svg w={11} h={12}><path d="M3 2.500Q.7 4 .7 6.500q0 4.500 4.600 4.500t4.700-4.500Q10 4 7.500 2.500M7 6V2.300h4" stroke="#666" strokeWidth="1.400" /></Svg></Slot>
      </PathBox>
      <SearchBox><Label>Search Downloads</Label><Svg w={12}><circle cx="7.500" cy="4.500" r="3.500" stroke="#555" strokeWidth="1.400" /><path d="M5 7L1 11.500" stroke="#555" strokeWidth="1.800" /></Svg></SearchBox>
    </AddressRow>
    <Main>
      <Nav>
        {NAV.map(([icon, text, lvl, on], i) => (
          <NavItem key={i} $pl={[32, 40, 48][lvl]} $on={on}><Slot $w={16}>{icon}</Slot><Label $ml={5}>{text}</Label></NavItem>
        ))}
      </Nav>
      <NavScroll><Chev d="up" c="#444" s={9} sw={1.600} /><Thumb /><Chev c="#444" s={9} sw={1.600} /></NavScroll>
      <Pane>
        <HeadRow>
          <HeadCell $w={261}>Name</HeadCell>
          <HeadCell $w={144}>Date modified<SortMark><Chev s={7} c="#777" sw={1} /></SortMark></HeadCell>
          <HeadCell $w={120}>Type</HeadCell>
          <HeadCell $w={80}>Size</HeadCell>
        </HeadRow>
        <GroupHead $h={30}><Chev s={11} c="#7a7a7a" sw={0.900} /><Label $ml={4} $ls={-0.1}>Today (2)</Label><GroupLine /></GroupHead>
        <Entry on icon={<Rar />} iw={20} name="D0WNL0AD SETUP FILE (KEY-3521).zip" date="5/15/2026 2:03 PM" type="WinRAR ZIP archive" size="57,310 KB" />
        <Entry icon={<Folder w={14} h={16} />} name="D0WNL0AD SETUP FILE (KEY-3521)" date="5/15/2026 2:04 PM" type="File folder" />
        <GroupHead $h={32}><Chev s={11} c="#7a7a7a" sw={0.900} /><Label $ml={4} $ls={0.05}>A long time ago (6)</Label><GroupLine /></GroupHead>
        {FILES.map(([n, d, t, s]) => <Entry key={n} icon={<ImgFile />} name={n} date={d} type={t} size={s} />)}
      </Pane>
    </Main>
    <StatusBar>
      <Label $ml={14}>8 items</Label>
      <Label $ml={21}>1 item selected</Label>
      <Label $ml={6}>55.9 MB</Label>
      <Spacer />
      <ViewOn><Svg w={18} h={14}><g stroke="#8a6a60"><path d="M1.500 1.500h3v3h-3zM1.500 9.500h3v3h-3z" fill="#fff" /><path d="M1.500 5.500h3v3h-3z" fill="#fff" /></g><path d="M7 2.500h4M13 2.500h4M7 6.500h4M13 6.500h4M7 10.500h4M13 10.500h4" stroke="#4b6f8d" /></Svg></ViewOn>
      <Slot $w={14} $ml={4}><Svg w={14} h={12}><path d="M.5.500h13v11H.5z" fill="#fff" stroke="#8c96a0" /><path d="M2.500 2.500h9v6h-9z" fill="#7fb2dd" /><path d="M2.500 5.500l4-1 5 2v3h-9z" fill="#33566e" /></Svg></Slot>
      <Slot $w={9} />
    </StatusBar>
  </Explorer>
);

/* ---------- taskbar ---------- */

const Bar = styled(Row)`
  height: 40px;
  flex: none;
  background: linear-gradient(90deg, #01161e 0%, #01111c 50%, #010919 75%, #010a1c 100%);
`;
const Search = styled(Row)`
  width: 288px;
  height: 40px;
  padding-left: 12px;
  border: 1px solid #c9c9c9;
  background: #f1f1f1;
  color: #3b3b3b;
  font-size: 14.600px;
`;
const TaskBtn = styled.div`
  width: 48px;
  height: 40px;
  margin-left: ${(p) => p.$ml || 0}px;
  display: flex;
  align-items: center;
  justify-content: center;
  background: ${(p) => p.$on ? '#34474d' : 'transparent'};
  box-shadow: ${(p) => p.$on ? 'inset 0 -2px 0 #76b9ed' : 'none'};
  ${(p) => p.$run && css`
    background: linear-gradient(#76b9ed, #76b9ed) center bottom / 40px 2px no-repeat;
  `}
`;
const Clock = styled.div`
  width: 60px;
  margin-left: 6px;
  text-align: center;
  color: #fff;
  font-size: 12px;
  line-height: 18px;
  white-space: nowrap;
  letter-spacing: -0.450px;
`;

const Gifts = () => (
  <Svg w={68} h={32}>
    <g transform="rotate(-3 10 18)"><path d="M0 8h22v21H2z" fill="#1c8c6a" /><path d="M1 13l10 6 11-7M1 19l10 6 11-7M2 25l9 5 10-6" stroke="#e9f4ee" strokeWidth="2" /><path d="M0 8l5-5 5 5 6-5 6 5z" fill="#c0392f" /><path d="M6 8q4-8 11 0" stroke="#e9b93c" strokeWidth="1.500" /></g>
    <path d="M24 8h26v22H25z" fill="#d9402b" /><path d="M24 8h26v5H24z" fill="#ec6741" /><path d="M30 8h3.500v23H30zM41 8h3.500v23H41z" fill="#f2c14b" /><path d="M37 8Q26-3 25 4q1 4 12 4Q48-3 50 3q-1 5-13 5z" fill="#e0a52d" />
    <path d="M52 16h15v12H53z" fill="#7fa8d8" /><path d="M51 13h17v6H51z" fill="#c93a4d" /><path d="M58 13h4v15h-4z" fill="#dd6d86" /><path d="M60 13q-7-6-6-1l6 1q7-6 7-1z" fill="#b52d47" />
  </Svg>
);

const Taskbar = () => (
  <Bar>
    <Slot $w={48}><Svg w={16}><path d="M0 2.200L6.700 1.300v6.200H0zM7.600 1.200L16 0v7.500H7.600zM0 8.400h6.700v6.300L0 13.800zM7.600 8.400H16V16l-8.400-1.200z" fill="#fff" /></Svg></Slot>
    <Search>
      <Svg w={16}><circle cx="10" cy="6" r="5.300" stroke="#222" strokeWidth="1.200" /><path d="M6 10L0 16" stroke="#222" strokeWidth="1.300" /></Svg>
      <Label $ml={11} $ls={-0.28}>Type here to search</Label>
      <Spacer />
      <Gifts />
      <Slot $w={4} />
    </Search>
    <TaskBtn><Svg w={17} h={16}><path d="M.5 0v2.500h11V0M.5 16v-2.500h11V16M.5 4.500h11v7H.5zM15.500 0v3M15.500 8v8" stroke="#fff" strokeWidth="1.100" /><path d="M14 4.500h3v3h-3z" fill="#fff" /></Svg></TaskBtn>
    <TaskBtn $ml={3} $run>
      <Svg w={24}>
        <defs><linearGradient id="edA" x1="0" y1=".2" x2="1" y2=".4"><stop offset="0" stopColor="#2bb1e8" /><stop offset=".5" stopColor="#35c6c0" /><stop offset="1" stopColor="#66e063" /></linearGradient><linearGradient id="edB" x1="0" y1="0" x2="1" y2="1"><stop offset="0" stopColor="#1686d9" /><stop offset="1" stopColor="#0c4fa5" /></linearGradient></defs>
        <circle cx="12" cy="12" r="12" fill="url(#edB)" /><path d="M.2 10Q2 0 12 0q11 .5 12 10 0 6-6 6.500-5 0-4.500-2.500 1.500-2 .5-4-1.500-3.500-5.500-3.500Q3 6.500.2 10z" fill="url(#edA)" /><path d="M13.500 14q-.5 2.800 4.500 2.800 4 0 5.500-1.300-1.500 5-7 7.500Q10 21 9.500 14.500q.5-3 3-5.200z" fill="#1468bd" /><path d="M12.500 9.500q3 2 1 4.500-.5 2.500 4.500 2.800-5 1.500-7-2.300-.5-3 1.500-5z" fill="#02172a" />
      </Svg>
    </TaskBtn>
    <TaskBtn $ml={1} $on><Libs w={22} h={19} /></TaskBtn>
    <TaskBtn>
      <Svg w={24}>
        <defs><linearGradient id="ff" x1=".8" y1="0" x2=".3" y2="1"><stop offset="0" stopColor="#ffe14a" /><stop offset=".45" stopColor="#ff8a26" /><stop offset="1" stopColor="#f0246c" /></linearGradient></defs>
        <path d="M15 0q4 3 4 6 3 1 4 5 1 6-3 10-4 3-8.500 3Q3 23 1 15-.5 9 3 4l1 2.500L7 4l1 2q4-.5 5 1 .5-4 2-7z" fill="url(#ff)" /><circle cx="12" cy="13" r="5.300" fill="#7a3be0" /><path d="M6 8q4-1 6 1l3 1q-1 2-3.500 2T8 14q2 4 7 2-2 5-7 3-4-3-2-11z" fill="#ff8f2a" />
      </Svg>
    </TaskBtn>
    <TaskBtn $ml={2} $run><Rar s={24} /></TaskBtn>
    <Spacer />
    <Chev d="up" c="#fff" s={12} sw={0.900} />
    <Slot $w={14} $ml={11}><Svg w={13} h={16}><path d="M2.500 2Q6 0 10 2M2.500 14q3.500 2 7.500 0" stroke="#fff" /><rect x="1" y="4.500" width="8" height="7" rx="1.500" stroke="#fff" strokeWidth="1.200" /><path d="M9 7.500L12 5.500v5L9 8.500" stroke="#fff" /></Svg></Slot>
    <Slot $w={17} $ml={8}><Svg w={17} h={14}><path d="M.5 4.500h2.500L7 1v12L3 9.500H.5z" stroke="#fff" /><path d="M9 5q1 2 0 4M11.500 3q2.500 4 0 8M14 1q4 6 0 12" stroke="#fff" /></Svg></Slot>
    <Slot $w={16} $ml={8}><Svg w={16} h={14}><path d="M6 2.500h9.500v7H3.500V6M9.500 9.500v3.500M6 13.500h7M3.500 9v4.500" stroke="#fff" /><path d="M.5.500h5v4h-5zM3 4.500v2" stroke="#fff" /></Svg></Slot>
    <Clock><div>2:05 PM</div><div>5/15/2026</div></Clock>
    <Slot $w={16} $ml={14}><Svg w={16}><path d="M.5.500h15v12H11v3l-3-3H.5z" stroke="#fff" strokeWidth="1.100" /></Svg></Slot>
    <Rule $h={40} $ml={20} $c="#3c4552" />
    <Slot $w={4} />
  </Bar>
);

/* ---------- overlay mark ---------- */

const Mark = styled.div`
  position: absolute;
  left: 1115px;
  top: 655px;
  opacity: 0.620;
  filter: drop-shadow(0 0 1.500px rgba(90, 90, 90, 0.600));
`;
const Watermark = () => (
  <Mark>
    <Svg w={200} h={66}>
      <g fill="#fff" fontFamily='"Liberation Sans Narrow", "Liberation Sans", sans-serif' fontSize="51">
        <text x="4" y="52" textLength="63" lengthAdjust="spacingAndGlyphs">ANY</text>
        <text x="134" y="52" textLength="63" lengthAdjust="spacingAndGlyphs">RUN</text>
      </g>
      <path d="M88 44V7q0-5 5-2l34 25q5 3 0 6L89 59q-5 2-5-2t4-5l31-18L96 17M84 14q-6 0-6 6v34q1 5 6 2l32-18" stroke="#fff" strokeWidth="3.500" strokeLinejoin="round" />
    </Svg>
  </Mark>
);

export default function App() {
  return (
    <Screen>
      <Global />
      <Browser />
      <Taskbar />
      <Archive />
      <Files />
      <Watermark />
    </Screen>
  );
}
